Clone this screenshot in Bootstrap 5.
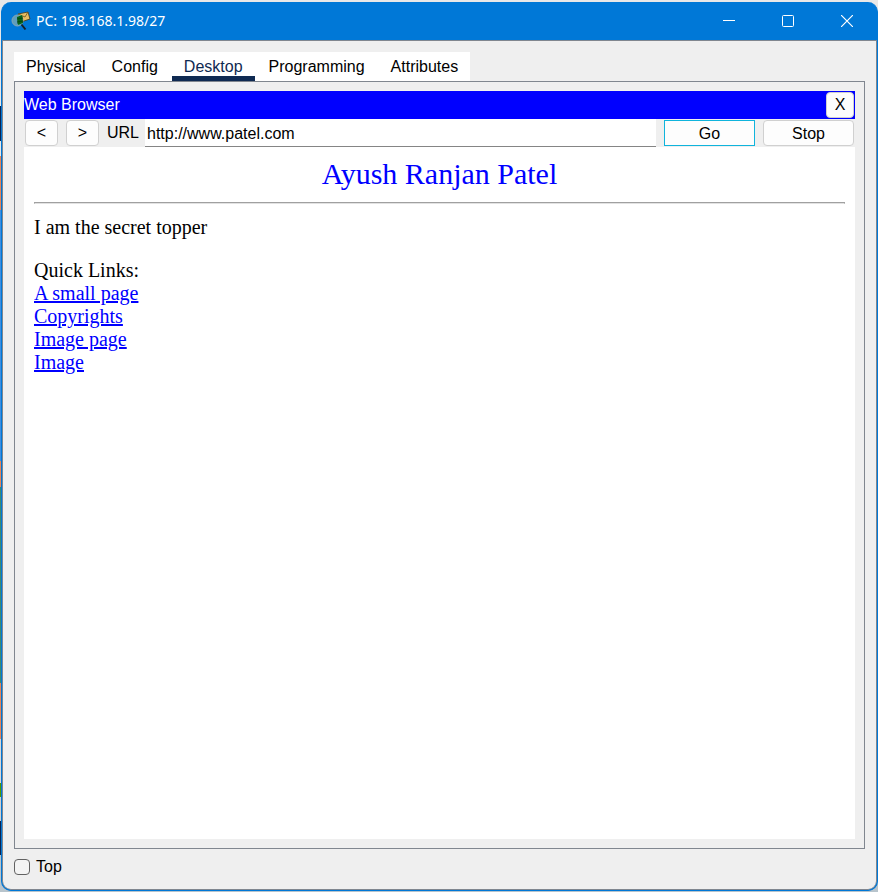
<!DOCTYPE html>
<html lang="en">
<head>
<meta charset="utf-8">
<meta name="viewport" content="width=device-width, initial-scale=1">
<title>PC: 198.168.1.98/27</title>
<link href="https://cdn.jsdelivr.net/npm/bootstrap@5.3.0/dist/css/bootstrap.min.css" rel="stylesheet">
<style>
body {
  font: 16px/20px "Liberation Sans", Arial, sans-serif;
  color: #000;
  padding: 2px 0 1px 1px;
  background: linear-gradient(#e8e8e8 0 11.9%, #0a2450 11.9% 15.8%, #e8e8e8 15.8% 17.5%, #e8875a 17.5% 23.5%, #3f8fe0 23.5% 51.7%, #e8875a 51.7% 54.6%, #3b8a72 54.6% 76.6%, #e8875a 76.6% 82.8%, #d8d8d8 82.8% 87.8%, #4f9a00 87.8% 89.4%, #d0d0d0 89.4% 92%, #0a2450 92% 95.8%, #b8c4cc 95.8%);
}
.app-window { border: 1px solid #0078d7; border-top: 0; border-radius: 10px; background: #0078d7; }
.title-bar { height: 38px; font: 14px/20px "Noto Sans", "Open Sans", sans-serif; padding: 0 1px 0 9px; }
.title-text { margin-left: 5px; }
.caption-btn { width: 59px; height: 38px; }
.client { background: #efefef; border: 1px solid #80868f; border-radius: 0 0 9px 9px; padding: 11px 11px 12px; }
.tabs { background: #fff; gap: 2px; }
.tab-btn { padding: 5px 12px 0; height: 29px; line-height: 19px; border-bottom: 5px solid transparent; }
.tab-btn.active { color: #0f2a52; border-bottom-color: #0f2a52; }
.panel { border: 1px solid #80868f; padding: 9px; }
.browser-bar { background: #00f; height: 28px; padding-right: 1px; }
.tool-btn { background: #fdfdfd; border: 1px solid #d0d0d0; border-radius: 4px; height: 26px; line-height: 20px; color: #000; }
.tool-btn.small-btn { width: 33px; }
.tool-btn.close-btn { width: 28px; }
.tool-btn.wide-btn { width: 91px; padding: 1px 0 0; }
.tool-btn.default-btn { border-color: #10b4dc; border-radius: 0; }
.toolbar-row { height: 28px; padding: 0 1px; }
.url-label { padding-right: 6px; }
.url-box { height: 28px; padding: 2px 2px 0; border-bottom: 1px solid #858585; min-width: 0; }
.web-page { font: 20px/23px "Liberation Serif", "Times New Roman", serif; padding: 10px; }
.web-page h1 { font: 30px/34px "Liberation Serif", "Times New Roman", serif; color: #00f; margin-bottom: 11px; }
.web-page hr { border: 1px solid #a0a0a0; border-bottom-color: #e2e2e2; opacity: 1; margin: 0 0 12px; }
.web-page p { margin-bottom: 20px; }
.web-page a { color: #00f; }
.footer-row { margin-top: 8px; gap: 6px; }
.top-check { width: 16px; height: 16px; border: 1px solid #626262; border-radius: 3px; background: #f4f4f4; }
.top-check:checked { background: #0078d7; }
</style>
</head>
<body class="vh-100 d-flex flex-column">
<div class="app-window flex-grow-1 d-flex flex-column overflow-hidden">
  <header class="title-bar d-flex align-items-center text-white">
    <svg width="20" height="20" viewBox="0 0 20 20" aria-hidden="true">
      <path d="M7 3l10-2 2 7-9 3z" fill="#e9bd63" stroke="#4a3816" stroke-width=".8"/>
      <path d="M7 3l7 3 3-5" fill="none" stroke="#6b5020" stroke-width=".8"/>
      <circle cx="6.500" cy="9.500" r="5.500" fill="#5f9dbc" stroke="#88a8b4"/>
      <path d="M6 6l5-2 1 8-5 2z" fill="#0b7a20"/>
      <path d="M7 6v7M9 5v8M11 5v7M6 8l6-1M6 11l6-1" stroke="#033b0c" stroke-width=".7"/>
      <path d="M10.500 13.500l4 5" stroke="#15202a" stroke-width="2"/>
    </svg>
    <span class="title-text flex-grow-1">PC: 198.168.1.98/27</span>
    <button type="button" class="caption-btn btn p-0 border-0 rounded-0 d-flex align-items-center justify-content-center" aria-label="Minimize"><svg width="12" height="12"><path d="M0 5.500h12" stroke="#fff"/></svg></button>
    <button type="button" class="caption-btn btn p-0 border-0 rounded-0 d-flex align-items-center justify-content-center" aria-label="Maximize"><svg width="12" height="12"><rect x=".5" y=".5" width="11" height="11" rx="1" fill="none" stroke="#fff"/></svg></button>
    <button type="button" class="caption-btn btn p-0 border-0 rounded-0 d-flex align-items-center justify-content-center" aria-label="Close"><svg width="12" height="12"><path d="M0 0l12 12M12 0L0 12" stroke="#fff" stroke-width="1.200"/></svg></button>
  </header>
  <main class="client flex-grow-1 d-flex flex-column">
    <div class="tabs d-flex align-self-start" role="tablist">
      <button type="button" role="tab" class="tab-btn border-top-0 border-start-0 border-end-0 bg-transparent">Physical</button>
      <button type="button" role="tab" class="tab-btn border-top-0 border-start-0 border-end-0 bg-transparent">Config</button>
      <button type="button" role="tab" aria-selected="true" class="tab-btn active border-top-0 border-start-0 border-end-0 bg-transparent">Desktop</button>
      <button type="button" role="tab" class="tab-btn border-top-0 border-start-0 border-end-0 bg-transparent">Programming</button>
      <button type="button" role="tab" class="tab-btn border-top-0 border-start-0 border-end-0 bg-transparent">Attributes</button>
    </div>
    <section class="panel flex-grow-1 d-flex flex-column">
      <div class="browser-bar d-flex align-items-center justify-content-between text-white">
        <span>Web Browser</span>
        <button type="button" class="tool-btn close-btn p-0" aria-label="Close browser">X</button>
      </div>
      <form class="toolbar-row d-flex align-items-center gap-2">
        <button type="button" class="tool-btn small-btn p-0" aria-label="Back">&lt;</button>
        <button type="button" class="tool-btn small-btn p-0" aria-label="Forward">&gt;</button>
        <div class="d-flex flex-grow-1 align-items-center">
          <label for="url" class="url-label">URL</label>
          <input id="url" type="text" class="url-box flex-grow-1 bg-white border-top-0 border-start-0 border-end-0 rounded-0" value="http://www.patel.com">
        </div>
        <button type="button" class="tool-btn wide-btn default-btn">Go</button>
        <button type="button" class="tool-btn wide-btn">Stop</button>
      </form>
      <article class="web-page bg-white flex-grow-1">
        <h1 class="text-center">Ayush Ranjan Patel</h1>
        <hr>
        <p>I am the secret topper</p>
        <div>Quick Links:</div>
        <div><a href="#small">A small page</a></div>
        <div><a href="#copyrights">Copyrights</a></div>
        <div><a href="#image-page">Image page</a></div>
        <div><a href="#image">Image</a></div>
      </article>
    </section>
    <div class="footer-row d-flex align-items-center">
      <input type="checkbox" id="top" class="top-check form-check-input m-0">
      <label for="top">Top</label>
    </div>
  </main>
</div>
<script src="https://cdn.jsdelivr.net/npm/bootstrap@5.3.0/dist/js/bootstrap.bundle.min.js"></script>
</body>
</html>
